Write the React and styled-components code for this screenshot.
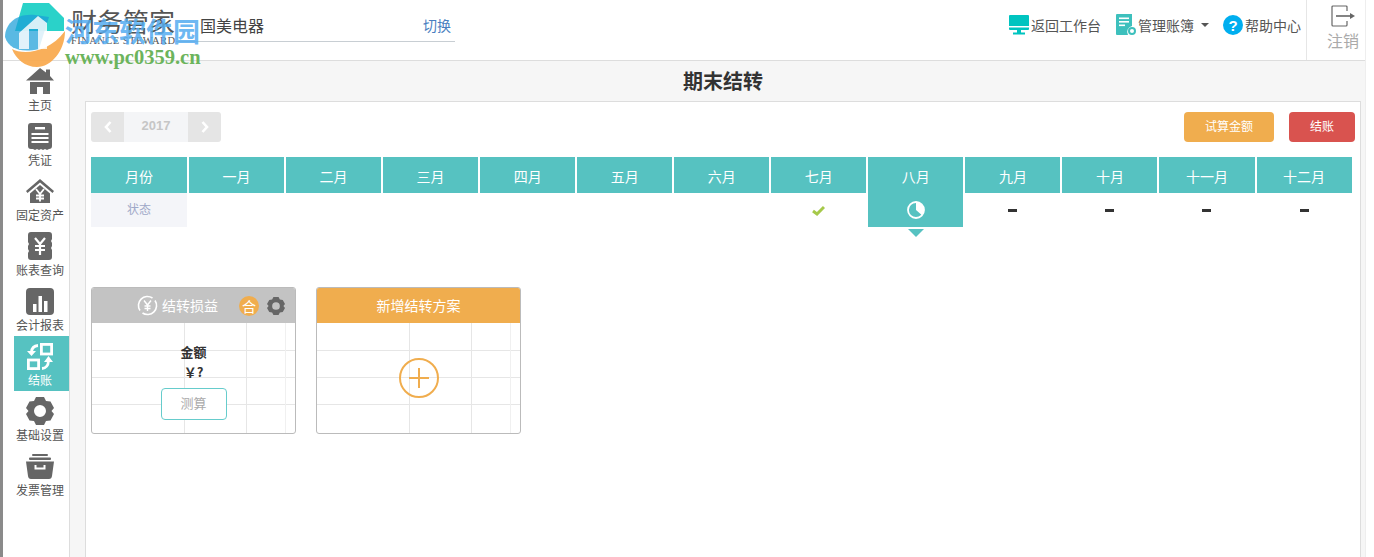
import React from "react";
import styled, { createGlobalStyle } from "styled-components";

const Global = createGlobalStyle`
  html, body {
    margin: 0;
    height: 557px;
    overflow: hidden;
    background: #fff;
    font-family: "Noto Sans CJK SC", "Liberation Sans", sans-serif;
  }
`;

const Frame = styled.div`
  position: relative;
  width: 1362px;
  height: 557px;
  border-left: 3px solid #8a8a8a;
  border-right: 1px solid #eee;
  display: flex;
  flex-direction: column;
  overflow: hidden;
`;

const TopBar = styled.header`
  height: 60px;
  flex: none;
  display: flex;
  align-items: stretch;
  border-bottom: 1px solid #ddd;
`;

const Brand = styled.div`
  width: 105px;
  margin-left: 68px;
  padding-top: 6px;
  color: #555;
`;

const BrandName = styled.div`
  font-size: 26px;
  line-height: 30px;
  white-space: nowrap;
`;

const BrandSub = styled.div`
  font-family: "Liberation Serif", serif;
  font-size: 10.5px;
  line-height: 10px;
  white-space: nowrap;
  letter-spacing: 0.45px;
`;

const Company = styled.div`
  width: 279px;
  height: 42px;
  box-sizing: border-box;
  border-bottom: 1px solid #c8ced3;
  display: flex;
  justify-content: space-between;
  align-items: center;
  padding: 9px 4px 0 24px;
  font-size: 16px;
  color: #444;
`;

const SwitchLink = styled.span`
  font-size: 14px;
  color: #4a7fbf;
`;

const TopActions = styled.div`
  margin-left: auto;
  display: flex;
  align-items: center;
  padding-bottom: 10px;
`;

const TopAction = styled.div`
  display: flex;
  align-items: center;
  gap: 2px;
  margin-left: ${(p) => p.$gap || 0}px;
  font-size: 14px;
  color: #555;
  white-space: nowrap;
`;

const Caret = styled.span`
  width: 0;
  height: 0;
  margin-left: 5px;
  border-left: 4px solid transparent;
  border-right: 4px solid transparent;
  border-top: 4px solid #555;
`;

const Logout = styled.div`
  width: 58px;
  height: 60px;
  margin: 0 0 -10px 5px;
  border-left: 1px solid #e6e6e6;
  display: flex;
  flex-direction: column;
  align-items: center;
  font-size: 16px;
  line-height: 22px;
  color: #aaa;
`;

const LogoutInner = styled.div`
  display: flex;
  flex-direction: column;
  align-items: center;
  gap: 2px;
  padding: 5px 0 0 14px;
`;

const Body = styled.div`
  flex: 1;
  display: flex;
  min-height: 0;
`;

const Sidebar = styled.nav`
  width: 67px;
  flex: none;
  box-sizing: border-box;
  padding-left: 11px;
  border-right: 1px solid #ddd;
`;

const NavItem = styled.div`
  width: 55px;
  height: 55px;
  box-sizing: border-box;
  padding: 5px 3px 0 0;
  display: flex;
  flex-direction: column;
  align-items: center;
  background: ${(p) => (p.$active ? "#56c2c1" : "transparent")};
  color: ${(p) => (p.$active ? "#fff" : "#555")};
`;

const NavIcon = styled.div`
  height: 30px;
  display: flex;
  align-items: center;
  justify-content: center;
`;

const NavLabel = styled.div`
  font-size: 12px;
  line-height: 18px;
  white-space: nowrap;
`;

const Main = styled.main`
  flex: 1;
  min-width: 0;
  background: #f6f6f6;
  padding: 0 4px 0 15px;
  display: flex;
  flex-direction: column;
`;

const Title = styled.h1`
  margin: 0;
  height: 40px;
  line-height: 40px;
  flex: none;
  text-align: center;
  font-size: 20px;
  font-weight: 700;
  color: #333;
`;

const Panel = styled.section`
  flex: 1;
  background: #fff;
  border: 1px solid #ddd;
  border-bottom: 0;
  padding: 10px 5px 0;
`;

const Toolbar = styled.div`
  display: flex;
  justify-content: space-between;
  align-items: center;
  height: 30px;
  margin-bottom: 15px;
`;

const YearPager = styled.div`
  display: flex;
  height: 30px;
  border-radius: 3px;
  overflow: hidden;
`;

const PagerArrow = styled.div`
  width: 33px;
  background: #e5e5e5;
  display: flex;
  align-items: center;
  justify-content: center;
`;

const PagerYear = styled.div`
  width: 64px;
  background: #f4f5f7;
  font-family: "Liberation Sans", sans-serif;
  font-weight: 700;
  font-size: 13px;
  line-height: 28px;
  text-align: center;
  color: #c6c6c6;
`;

const ToolButtons = styled.div`
  display: flex;
  gap: 15px;
`;

const ToolButton = styled.button`
  width: ${(p) => p.$w}px;
  height: 30px;
  padding: 0 0 3px;
  border: 0;
  border-radius: 4px;
  background: ${(p) => p.$bg};
  color: #fff;
  font-family: inherit;
  font-size: 12px;
`;

const MonthGrid = styled.div`
  display: grid;
  grid-template-columns: 96px repeat(12, 95.05px);
  column-gap: 2px;
`;

const MonthHead = styled.div`
  height: 36px;
  line-height: 38px;
  background: #56c2c1;
  color: #fff;
  font-size: 14px;
  text-align: center;
`;

const StatusCell = styled.div`
  position: relative;
  height: 34px;
  box-sizing: border-box;
  padding-bottom: ${(p) => p.$lift || 0}px;
  display: flex;
  align-items: center;
  justify-content: center;
  font-size: 12px;
  color: #9fa8c8;
  background: ${(p) => p.$bg || "transparent"};
`;

const Dash = styled.span`
  display: block;
  width: 9px;
  height: 3px;
  background: #333;
`;

const Pointer = styled.span`
  position: absolute;
  top: 36px;
  left: 50%;
  margin-left: -8px;
  width: 0;
  height: 0;
  border-left: 8px solid transparent;
  border-right: 8px solid transparent;
  border-top: 8px solid #56c2c1;
`;

const CardRow = styled.div`
  display: flex;
  gap: 20px;
  margin-top: 60px;
`;

const Card = styled.div`
  width: 205px;
  height: 147px;
  box-sizing: border-box;
  border: 1px solid #bbb;
  border-radius: 3px;
  overflow: hidden;
  display: flex;
  flex-direction: column;
`;

const CardHead = styled.div`
  position: relative;
  height: 35px;
  flex: none;
  box-sizing: border-box;
  padding: 0 ${(p) => p.$shift || 0}px 2px 0;
  background: ${(p) => p.$bg};
  color: #fff;
  font-size: 14px;
  display: flex;
  align-items: center;
  justify-content: center;
  gap: 4px;
`;

const CoinIcon = styled.svg`
  margin-top: 2px;
`;

const HeadTools = styled.div`
  position: absolute;
  right: 10px;
  top: 8px;
  display: flex;
  align-items: center;
  gap: 8px;
`;

const HeBadge = styled.span`
  width: 20px;
  height: 20px;
  border-radius: 50%;
  background: #f0ad4e;
  color: #fff;
  font-size: 14px;
  line-height: 20px;
  text-align: center;
`;

const line = "#e6e6e6";
const CardBody = styled.div`
  flex: 1;
  display: flex;
  flex-direction: column;
  align-items: center;
  padding-top: ${(p) => p.$top}px;
  background-repeat: no-repeat;
  background-image:
    linear-gradient(${line}, ${line}), linear-gradient(${line}, ${line}),
    linear-gradient(#f0f0f0, #f0f0f0), linear-gradient(${line}, ${line}),
    linear-gradient(${line}, ${line}), linear-gradient(${line}, ${line});
  background-size: 1px 100%, 1px 100%, 1px 100%, 100% 1px, 100% 1px, 100% 1px;
  background-position: 92px 0, 154px 0, 193px 0, 0 27px, 0 54px, 0 81px;
`;

const AmountText = styled.div`
  font-size: 13px;
  line-height: 20px;
  font-weight: 700;
  color: #333;
`;

const MeasureButton = styled.button`
  width: 66px;
  height: 32px;
  margin-top: 6px;
  padding: 0 0 4px;
  background: #fff;
  border: 1px solid #66cccc;
  border-radius: 4px;
  font-family: inherit;
  font-size: 13px;
  color: #aaa;
`;

const MarkLogo = styled.svg`
  position: absolute;
  left: 2px;
  top: 3px;
`;

const MarkName = styled.div`
  position: absolute;
  left: 62px;
  top: 14px;
  font-size: 27px;
  line-height: 34px;
  font-weight: 700;
  white-space: nowrap;
  color: rgba(84, 172, 240, 0.85);
`;

const MarkUrl = styled.div`
  position: absolute;
  left: 62px;
  top: 46px;
  font-family: "Liberation Serif", serif;
  font-size: 20.5px;
  line-height: 22px;
  font-weight: 700;
  white-space: nowrap;
  color: #6cb45c;
`;

const months = ["一月", "二月", "三月", "四月", "五月", "六月", "七月", "八月", "九月", "十月", "十一月", "十二月"];

const Icon = ({ w, h, children, fill = "#666" }) => (
  <svg width={w} height={h} viewBox={`0 0 ${w} ${h}`} fill={fill}>
    {children}
  </svg>
);

const gearPath =
  "M10 0 H18 L20 4 L24.5 4.5 L28 11 L25.5 14 L28 17 L24.5 23.5 L20 24 L18 28 H10 L8 24 L3.5 23.5 L0 17 L2.5 14 L0 11 L3.5 4.5 L8 4 Z M14 8 A6 6 0 1 0 14 20 A6 6 0 1 0 14 8 Z";

const navItems = [
  {
    label: "主页",
    icon: (
      <Icon w={28} h={26}>
        <path d="M14 0 L20 4.5 V1.5 H24 V8 L28 12.5 H0 Z" />
        <path d="M4 14 H24 V26 H17 V19 H11 V26 H4 Z" />
      </Icon>
    ),
  },
  {
    label: "凭证",
    icon: (
      <Icon w={24} h={27}>
        <path d="M3 0 H21 Q24 0 24 3 V23 Q24 26 21 26 L19 27 L17 26 L15 27 L13 26 L11 27 L9 26 L7 27 L5 26 L3 26 Q0 26 0 23 V3 Q0 0 3 0 Z" />
        <rect x="7" y="4" width="10" height="2.4" fill="#fff" />
        <rect x="3.5" y="10" width="17" height="2" fill="#fff" />
        <rect x="3.5" y="14" width="17" height="2" fill="#fff" />
        <rect x="3.5" y="18" width="17" height="2" fill="#fff" />
      </Icon>
    ),
  },
  {
    label: "固定资产",
    icon: (
      <Icon w={28} h={24}>
        <path d="M14 0 L28 12 L26.5 14 L14 3.5 L1.5 14 L0 12 Z" />
        <path d="M14 6 L24 14.5 V24 H4 V14.5 Z" />
        <path d="M10 10 L14 15 L18 10 M14 15 V22.5 M10 16.5 H18 M10 19.5 H18" fill="none" stroke="#fff" strokeWidth="1.8" />
      </Icon>
    ),
  },
  {
    label: "账表查询",
    icon: (
      <Icon w={24} h={28}>
        <path d="M3 0 H21 Q24 0 24 3 V7 L23 9 L24 11 V14 L23 16 L24 18 V25 Q24 28 21 28 H3 Q0 28 0 25 V21 L1 19 L0 17 V14 L1 12 L0 10 V3 Q0 0 3 0 Z" />
        <path d="M7 6 L12 12 L17 6 M12 12 V23 M7 14 H17 M7 18 H17" fill="none" stroke="#fff" strokeWidth="2.2" />
      </Icon>
    ),
  },
  {
    label: "会计报表",
    icon: (
      <Icon w={28} h={27}>
        <rect width="28" height="27" rx="4" />
        <rect x="7" y="16" width="3.5" height="8" fill="#fff" />
        <rect x="12.5" y="8" width="3.5" height="16" fill="#fff" />
        <rect x="18" y="13" width="3.5" height="11" fill="#fff" />
      </Icon>
    ),
  },
  {
    label: "结账",
    active: true,
    icon: (
      <Icon w={26} h={27} fill="none">
        <g stroke="#fff" strokeWidth="2.8">
          <rect x="14.4" y="1.4" width="10.2" height="9.6" />
          <rect x="1.4" y="17" width="10.2" height="8.6" />
          <path d="M11 2.5 Q5 3 4.5 9" />
          <path d="M15 25.5 Q21 25 21.5 18" />
        </g>
        <path d="M0 8 H9 L4.5 13 Z M17 19 L21.5 13 L26 19 Z" fill="#fff" />
      </Icon>
    ),
  },
  {
    label: "基础设置",
    icon: (
      <Icon w={28} h={28}>
        <path fillRule="evenodd" d={gearPath} />
      </Icon>
    ),
  },
  {
    label: "发票管理",
    icon: (
      <Icon w={28} h={25}>
        <rect x="6" y="0" width="16" height="2" rx="1" />
        <rect x="3" y="3.5" width="22" height="2.5" rx="1" />
        <path fillRule="evenodd" d="M0 7.5 H28 L26 22 Q25.6 25 23 25 H5 Q2.4 25 2 22 Z M8.5 11 V15.5 H19.5 V11 H17.5 V13.5 H10.5 V11 Z" />
      </Icon>
    ),
  },
];

export default function App() {
  return (
    <>
      <Global />
      <Frame>
        <TopBar>
          <Brand>
            <BrandName>财务管家</BrandName>
            <BrandSub>FINANCE STEWARD</BrandSub>
          </Brand>
          <Company>
            <span>国美电器</span>
            <SwitchLink>切换</SwitchLink>
          </Company>
          <TopActions>
            <TopAction>
              <Icon w={20} h={20} fill="#00c4c0">
                <path d="M1 0 H19 Q20 0 20 1 V11 H0 V1 Q0 0 1 0 Z" />
                <path d="M0 12.5 H20 V14 Q20 15 19 15 H1 Q0 15 0 14 Z" />
                <path d="M8 15 H12 V17.5 H16 V19.5 H4 V17.5 H8 Z" />
              </Icon>
              返回工作台
            </TopAction>
            <TopAction $gap={15}>
              <Icon w={20} h={22} fill="#3dc0bd">
                <path d="M1 0 H16 V12 A6 6 0 0 0 12 21 H1 Q0 21 0 20 V1 Q0 0 1 0 Z" />
                <rect x="3" y="3.5" width="10" height="1.6" fill="#fff" />
                <rect x="3" y="7" width="10" height="1.6" fill="#fff" />
                <rect x="3" y="10.5" width="6" height="1.6" fill="#fff" />
                <circle cx="16" cy="17" r="3" fill="none" stroke="#3dc0bd" strokeWidth="2" />
              </Icon>
              管理账簿
              <Caret />
            </TopAction>
            <TopAction $gap={14}>
              <Icon w={20} h={20} fill="#00aeef">
                <circle cx="10" cy="10" r="10" />
                <text x="10" y="15.5" textAnchor="middle" fontSize="15" fontWeight="700" fontFamily="Liberation Sans" fill="#fff">?</text>
              </Icon>
              帮助中心
            </TopAction>
            <Logout>
              <LogoutInner>
                <svg width="24" height="22" viewBox="0 0 24 22" fill="none" stroke="#666">
                  <path d="M16 6 V2 Q16 1 15 1 H2 Q1 1 1 2 V20 Q1 21 2 21 H15 Q16 21 16 20 V16" strokeWidth="1.2" />
                  <path d="M5 11 H20" strokeWidth="1.6" />
                  <path d="M19 8 L24 11 L19 14 Z" fill="#666" stroke="none" />
                </svg>
                注销
              </LogoutInner>
            </Logout>
          </TopActions>
        </TopBar>
        <Body>
          <Sidebar>
            {navItems.map((item) => (
              <NavItem key={item.label} $active={item.active}>
                <NavIcon>{item.icon}</NavIcon>
                <NavLabel>{item.label}</NavLabel>
              </NavItem>
            ))}
          </Sidebar>
          <Main>
            <Title>期末结转</Title>
            <Panel>
              <Toolbar>
                <YearPager>
                  <PagerArrow>
                    <svg width="8" height="12" viewBox="0 0 8 12" fill="none" stroke="#fff" strokeWidth="2.6">
                      <path d="M6.5 1 L2 6 L6.5 11" />
                    </svg>
                  </PagerArrow>
                  <PagerYear>2017</PagerYear>
                  <PagerArrow>
                    <svg width="8" height="12" viewBox="0 0 8 12" fill="none" stroke="#fff" strokeWidth="2.6">
                      <path d="M1.5 1 L6 6 L1.5 11" />
                    </svg>
                  </PagerArrow>
                </YearPager>
                <ToolButtons>
                  <ToolButton $w={90} $bg="#f0ad4e">试算金额</ToolButton>
                  <ToolButton $w={66} $bg="#d9534f">结账</ToolButton>
                </ToolButtons>
              </Toolbar>
              <MonthGrid>
                <MonthHead>月份</MonthHead>
                {months.map((m) => (
                  <MonthHead key={m}>{m}</MonthHead>
                ))}
                <StatusCell $bg="#f4f5f9" $lift={4}>状态</StatusCell>
                {months.map((m, i) => {
                  if (i < 6) return <StatusCell key={m} />;
                  if (i === 6)
                    return (
                      <StatusCell key={m}>
                        <svg width="13" height="11" viewBox="0 0 13 11" fill="none" stroke="#a6c94a" strokeWidth="3">
                          <path d="M1 6 L5 9 L12 2" />
                        </svg>
                      </StatusCell>
                    );
                  if (i === 7)
                    return (
                      <StatusCell key={m} $bg="#56c2c1">
                        <svg width="18" height="18" viewBox="0 0 18 18" fill="none">
                          <circle cx="9" cy="9" r="8" stroke="#fff" strokeWidth="1.8" />
                          <path d="M9 1 A8 8 0 0 1 15 14.3 L9 9 Z" fill="#fff" />
                        </svg>
                        <Pointer />
                      </StatusCell>
                    );
                  return (
                    <StatusCell key={m}>
                      <Dash />
                    </StatusCell>
                  );
                })}
              </MonthGrid>
              <CardRow>
                <Card>
                  <CardHead $bg="#c3c3c3" $shift={32}>
                    <CoinIcon width="21" height="21" viewBox="0 0 21 21" fill="none" stroke="#fff" strokeWidth="1.6">
                      <path d="M3 15.5 A9 9 0 0 1 15.5 3" />
                      <path d="M18 5.5 A9 9 0 0 1 5.5 18" />
                      <path d="M7 5.5 L10.5 10 L14 5.5 M10.5 10 V16 M7.5 11 H13.5 M7.5 13.5 H13.5" strokeWidth="1.4" />
                    </CoinIcon>
                    结转损益
                    <HeadTools>
                      <HeBadge>合</HeBadge>
                      <svg width="18" height="18" viewBox="0 0 28 28" fill="#666">
                        <path fillRule="evenodd" d={gearPath} />
                      </svg>
                    </HeadTools>
                  </CardHead>
                  <CardBody $top={19}>
                    <AmountText>金额</AmountText>
                    <AmountText>￥?</AmountText>
                    <MeasureButton>测算</MeasureButton>
                  </CardBody>
                </Card>
                <Card>
                  <CardHead $bg="#f0ad4e">新增结转方案</CardHead>
                  <CardBody $top={35}>
                    <svg width="40" height="40" viewBox="0 0 40 40" fill="none" stroke="#f0ad4e">
                      <circle cx="20" cy="20" r="19" strokeWidth="2" />
                      <path d="M10 20 H30 M20 10 V30" strokeWidth="2" />
                    </svg>
                  </CardBody>
                </Card>
              </CardRow>
            </Panel>
          </Main>
        </Body>
        <MarkLogo width="60" height="64" viewBox="0 0 60 64">
          <path d="M18 0 H44 L59 15 V28 H10 Z" fill="#1fd0c6" opacity="0.95" />
          <path d="M0 34 C0 22 10 10 30 12 L44 14 L34 46 C16 50 4 46 0 34 Z" fill="#1a9ed8" opacity="0.72" />
          <path d="M7 46 C18 52 44 50 60 28 C60 48 46 64 32 64 C20 64 11 56 7 46 Z" fill="#f8a84c" opacity="0.92" />
          <path d="M14 30 L33 13 L42 20 V46 H33 V26 H24 V46 H14 Z" fill="#fff" opacity="0.82" />
        </MarkLogo>
        <MarkName>河东软件园</MarkName>
        <MarkUrl>www.pc0359.cn</MarkUrl>
      </Frame>
    </>
  );
}
